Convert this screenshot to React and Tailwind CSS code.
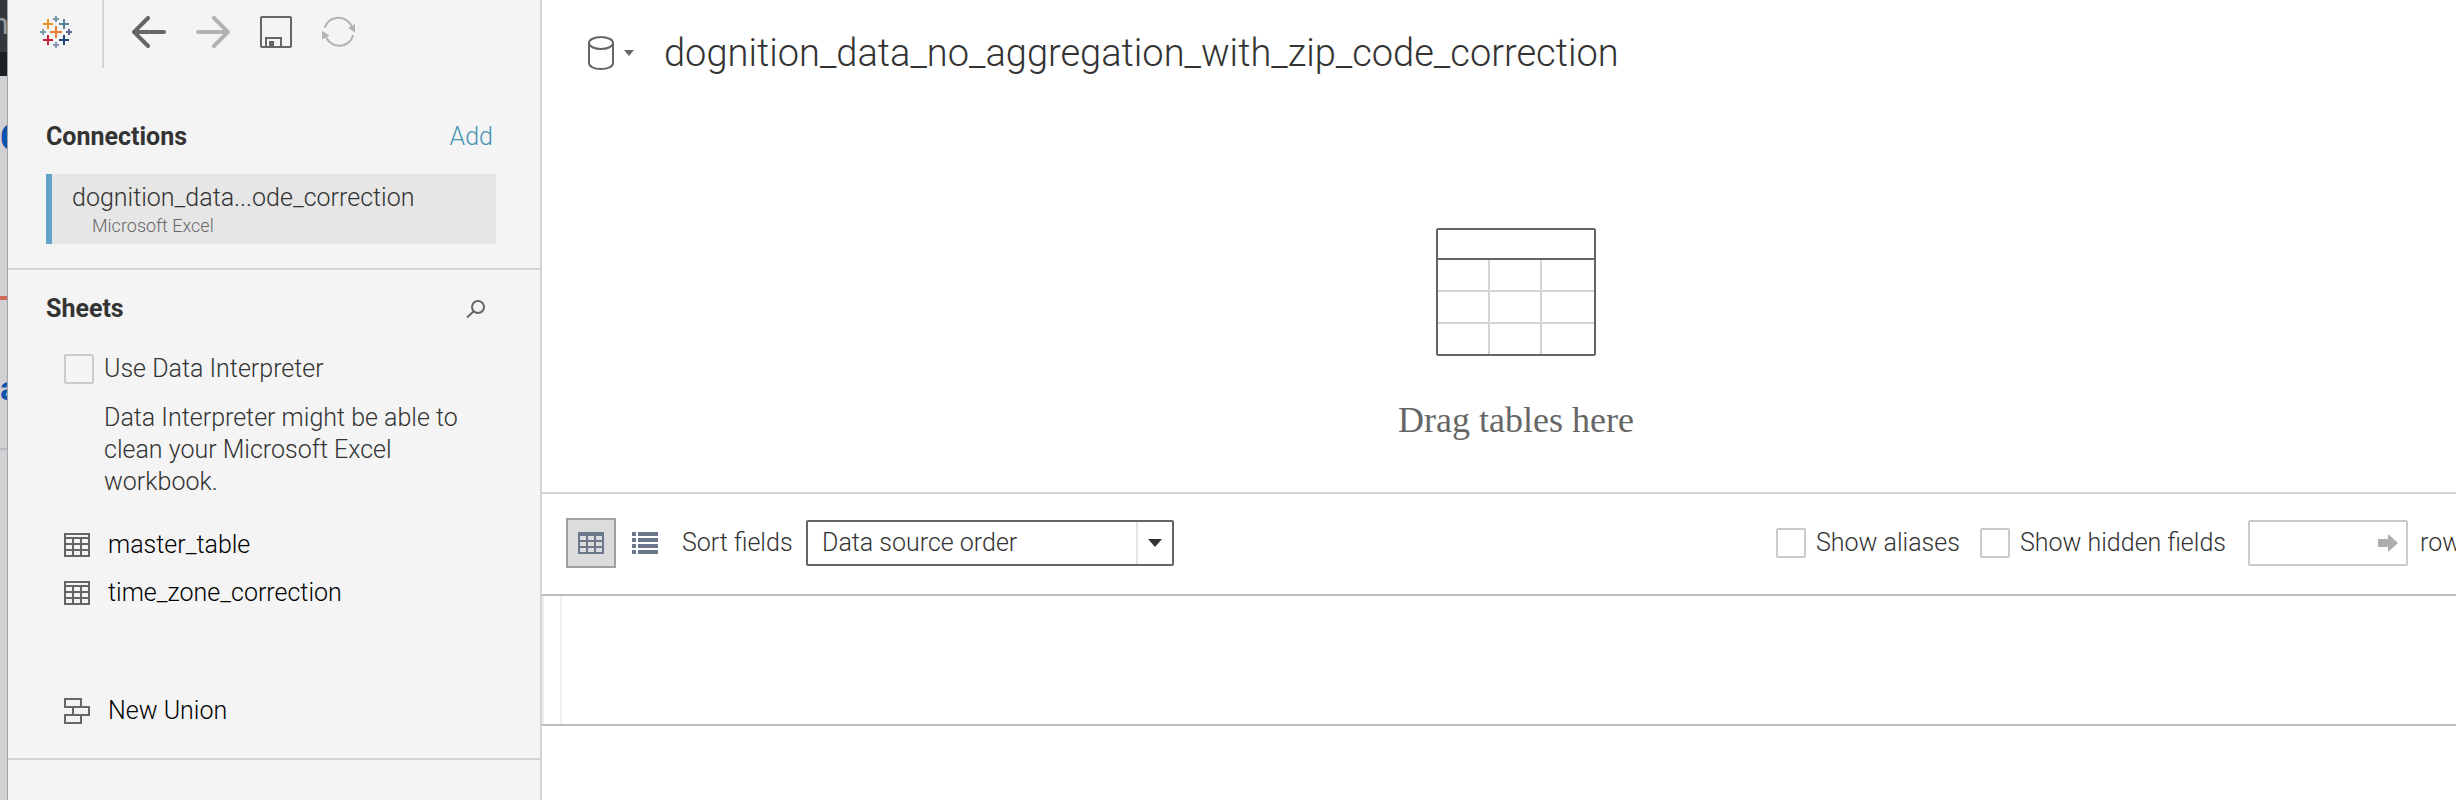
import React from "react";

function TableauMark() {
  const plus = (x, y, r, w, color) => (
    <path d={`M${x - r} ${y}H${x + r}M${x} ${y - r}V${y + r}`} stroke={color} strokeWidth={w} />
  );
  return (
    <svg viewBox="0 0 32 32" className="size-8" fill="none" aria-hidden="true">
      {plus(16, 16, 6, 2, "#eb7a33")}
      {plus(8, 8, 5, 2, "#ea9127")}
      {plus(24, 8, 5, 2, "#56839a")}
      {plus(8, 24, 5, 2, "#c8203d")}
      {plus(24, 24, 5, 2, "#1e447e")}
      {plus(16, 3, 3, 2, "#7299a6")}
      {plus(3, 16, 3, 2, "#7ba0ac")}
      {plus(29, 16, 3, 2, "#5c6692")}
      {plus(16, 29, 3, 2, "#8b95b8")}
    </svg>
  );
}

function ArrowLeft() {
  return (
    <svg viewBox="0 0 34 32" className="h-8 w-[34px]" fill="none" stroke="#666" strokeWidth="4" strokeLinecap="round" aria-hidden="true">
      <path d="M32 16H3M16 2L2 16L16 30" />
    </svg>
  );
}

function ArrowRight() {
  return (
    <svg viewBox="0 0 34 32" className="h-8 w-[34px]" fill="none" stroke="#b3b3b3" strokeWidth="4" strokeLinecap="round" aria-hidden="true">
      <path d="M2 16H31M18 2L32 16L18 30" />
    </svg>
  );
}

function SaveIcon() {
  return (
    <svg viewBox="0 0 32 32" className="size-8" fill="none" stroke="#666" strokeWidth="2" aria-hidden="true">
      <rect x="1" y="1" width="30" height="30" rx="1" />
      <path d="M6 31V22H21V31" />
      <rect x="9" y="25" width="5" height="5" fill="#666" stroke="none" />
    </svg>
  );
}

function RefreshIcon() {
  return (
    <svg viewBox="0 0 34 32" className="h-8 w-[34px]" fill="none" stroke="#b3b3b3" strokeWidth="2" aria-hidden="true">
      <path d="M2.6 12A14.4 14.4 0 0 1 29.5 10" />
      <path d="M31.2 19A14.4 14.4 0 0 1 4.2 21.5" />
      <path d="M33 8V16.500L26 12Z" fill="#b3b3b3" stroke="none" />
      <path d="M0 15L7.500 19.500L0 23.500Z" fill="#b3b3b3" stroke="none" />
    </svg>
  );
}

function SearchIcon() {
  return (
    <svg viewBox="0 0 20 20" className="size-5" fill="none" stroke="#666" strokeWidth="2" aria-hidden="true">
      <circle cx="12" cy="8" r="6" />
      <path d="M8 12L1 18.500" />
    </svg>
  );
}

function SheetIcon() {
  return (
    <svg viewBox="0 0 26 24" className="h-6 w-[26px] shrink-0" fill="none" stroke="#666" strokeWidth="2" aria-hidden="true">
      <path d="M1 1H25V23H1ZM1 5H25M1 11H25M1 17H25M9 5V23M17 5V23" />
    </svg>
  );
}

function UnionIcon() {
  return (
    <svg viewBox="0 0 26 26" className="size-[26px] shrink-0" fill="none" stroke="#666" strokeWidth="2" aria-hidden="true">
      <path d="M1 1H17V9H1ZM9 9H25V17H9ZM1 17H17V25H1Z" />
    </svg>
  );
}

function DatabaseIcon() {
  return (
    <svg viewBox="0 0 26 34" className="h-[34px] w-[26px]" fill="none" stroke="#666" strokeWidth="2" aria-hidden="true">
      <ellipse cx="13" cy="7" rx="12" ry="6" />
      <path d="M1 7V27C1 30.500 6 33 13 33S25 30.500 25 27V7" />
    </svg>
  );
}

function GridIcon() {
  return (
    <svg viewBox="0 0 26 22" className="h-[22px] w-[26px]" aria-hidden="true">
      <rect width="26" height="22" fill="#6b788c" />
      {[4, 10, 16].map((y) =>
        [2, 10, 18].map((x) => <rect key={`${x}-${y}`} x={x} y={y} width="6" height="4" fill="#dcdcdc" />)
      )}
    </svg>
  );
}

function ListIcon() {
  return (
    <svg viewBox="0 0 26 22" className="h-[22px] w-[26px]" fill="#6b788c" aria-hidden="true">
      {[0, 6, 12, 18].map((y) => (
        <path key={y} d={`M0 ${y}h4v4h-4zM6 ${y}h20v4h-20z`} />
      ))}
    </svg>
  );
}

function EmptyTable() {
  return (
    <svg viewBox="0 0 160 128" className="h-32 w-40" fill="none" strokeWidth="2" aria-hidden="true">
      <path d="M53 32V126M105 32V126M2 63H158M2 95H158" stroke="#d4d4d4" />
      <rect x="1" y="1" width="158" height="126" rx="1" stroke="#666" />
      <path d="M1 31H159" stroke="#666" />
    </svg>
  );
}

function Checkbox({ id }) {
  return (
    <input
      id={id}
      type="checkbox"
      className="size-[30px] shrink-0 appearance-none rounded-xs border-2 border-[#cbcbcb] checked:bg-[#62a5c9]"
    />
  );
}

function BackgroundEdge() {
  return (
    <div className="w-2 shrink-0 overflow-hidden border-r border-[#a3a4a5] bg-[#d0d1d2] font-['Roboto',sans-serif] font-normal" aria-hidden="true">
      <div className="h-[52px] bg-[#33393d] pt-2 text-[30px] leading-8 text-[#9a9c9e]">
        <span className="-ml-2">n</span>
      </div>
      <div className="h-6 bg-[#1c2025]" />
      <div className="pt-11 text-[36px] leading-9 font-bold text-[#0a55b0]">C</div>
      <div className="mt-35 h-1 bg-[#d56a5b]" />
      <div className="pt-[70px] text-[34px] leading-9 font-bold text-[#0a55b0]">a</div>
      <div className="mt-[42px] h-0.5 bg-[#b9bbc2]" />
    </div>
  );
}

function SheetRow({ icon, children }) {
  return (
    <button type="button" className="flex h-12 w-full items-center gap-[18px] pl-14 text-left text-black">
      {icon}
      <span>{children}</span>
    </button>
  );
}

function Sidebar() {
  return (
    <aside className="w-[534px] shrink-0 border-r-2 border-[#d4d4d4] bg-[#f4f4f4]">
      <div className="flex h-[68px] items-start">
        <button type="button" aria-label="Start page" className="ml-8 pt-4"><TableauMark /></button>
        <div className="mr-7 ml-[30px] h-full w-0.5 bg-[#d4d4d4]" />
        <div className="flex gap-[30px] pt-4">
          <button type="button" aria-label="Undo"><ArrowLeft /></button>
          <button type="button" aria-label="Redo"><ArrowRight /></button>
          <button type="button" aria-label="Save"><SaveIcon /></button>
          <button type="button" aria-label="Refresh"><RefreshIcon /></button>
        </div>
      </div>

      <section className="border-b-2 border-[#d4d4d4] pt-[53px] pr-11 pb-6 pl-[38px]">
        <div className="flex h-8 items-center justify-between">
          <h2 className="font-bold">Connections</h2>
          <a href="#add" className="pr-[3px] text-[#4996b2]">Add</a>
        </div>
        <button type="button" className="mt-[21px] flex h-[70px] w-full flex-col justify-end border-l-6 border-[#62a5c9] bg-[#e6e6e6] pb-1.5 pl-5 text-left">
          <span className="leading-8">dognition_data...ode_correction</span>
          <span className="pl-5 text-[18px] leading-6 text-[#666]">Microsoft Excel</span>
        </button>
      </section>

      <section className="border-b-2 border-[#d4d4d4] py-[23px]">
        <div className="flex h-8 items-center justify-between pr-[54px] pl-[38px]">
          <h2 className="font-bold">Sheets</h2>
          <button type="button" aria-label="Search sheets"><SearchIcon /></button>
        </div>
        <div className="mt-7 flex items-center gap-[10px] pl-14">
          <Checkbox id="interpreter" />
          <label htmlFor="interpreter">Use Data Interpreter</label>
        </div>
        <p className="mt-[17px] pr-16 pl-24">
          Data Interpreter might be able to clean your Microsoft Excel workbook.
        </p>
        <div className="pt-[23px]">
          <SheetRow icon={<SheetIcon />}>master_table</SheetRow>
          <SheetRow icon={<SheetIcon />}>time_zone_correction</SheetRow>
        </div>
        <div className="pt-[70px]">
          <SheetRow icon={<UnionIcon />}>New Union</SheetRow>
        </div>
      </section>
    </aside>
  );
}

function FieldToolbar() {
  return (
    <div className="flex h-[102px] items-center border-b-2 border-[#bdbdbd] pr-5 pb-0.5 pl-6">
      <button type="button" aria-label="Grid view" aria-pressed="true" className="flex size-[50px] items-center justify-center border-2 border-[#a0a0a0] bg-[#dcdcdc]">
        <GridIcon />
      </button>
      <button type="button" aria-label="List view" className="ml-4"><ListIcon /></button>
      <label htmlFor="sort" className="ml-6 w-[124px]">Sort fields</label>
      <div className="relative">
        <select id="sort" className="h-[46px] w-[368px] appearance-none rounded-xs border-2 border-[#666] bg-white pl-[14px]">
          <option>Data source order</option>
        </select>
        <div className="pointer-events-none absolute inset-y-0.5 right-0.5 flex w-9 items-center justify-center border-l-2 border-[#e4e4e4]">
          <svg viewBox="0 0 14 8" className="h-2 w-[14px]" fill="#333" aria-hidden="true"><path d="M0 0H14L7 8Z" /></svg>
        </div>
      </div>
      <div className="ml-auto flex items-center">
        <Checkbox id="aliases" />
        <label htmlFor="aliases" className="w-[174px] pl-[10px]">Show aliases</label>
        <Checkbox id="hidden" />
        <label htmlFor="hidden" className="w-[238px] pl-[10px]">Show hidden fields</label>
        <div className="relative">
          <input id="rows" type="text" className="h-[46px] w-40 rounded-xs border-2 border-[#cbcbcb] bg-white pr-9 pl-3" />
          <svg viewBox="0 0 20 18" className="absolute top-[14px] right-[10px] h-[18px] w-5" fill="#adadad" aria-hidden="true">
            <path d="M0 5H10V0L20 9L10 18V13H0Z" />
          </svg>
        </div>
        <label htmlFor="rows" className="w-[62px] pl-3">rows</label>
      </div>
    </div>
  );
}

export default function App() {
  return (
    <div className="flex min-h-screen overflow-hidden bg-white font-['Roboto','Liberation_Sans',sans-serif] text-[25px] leading-8 font-[350] text-[#333]">
      <BackgroundEdge />
      <Sidebar />
      <main className="min-w-0 grow overflow-hidden">
        <div className="w-[calc(100%+34px)]">
          <div className="h-[494px] border-b-2 border-[#d4d4d4]">
            <header className="flex h-[106px] items-center pl-[46px]">
              <button type="button" aria-label="Data source menu" className="flex items-center gap-[10px]">
                <DatabaseIcon />
                <svg viewBox="0 0 10 6" className="h-[6px] w-[10px]" fill="#666" aria-hidden="true"><path d="M0 0H10L5 6Z" /></svg>
              </button>
              <h1 className="ml-[30px] text-[38px] leading-12">dognition_data_no_aggregation_with_zip_code_correction</h1>
            </header>
            <div className="flex flex-col items-center pt-[122px]">
              <EmptyTable />
              <p className="mt-10 font-['Liberation_Serif',serif] text-[36px] leading-12 font-normal text-[#666]">Drag tables here</p>
            </div>
          </div>
          <FieldToolbar />
          <div className="flex h-[130px] border-b-2 border-[#bdbdbd]">
            <div className="w-5 border-x-2 border-[#efefef]" />
          </div>
        </div>
      </main>
    </div>
  );
}
